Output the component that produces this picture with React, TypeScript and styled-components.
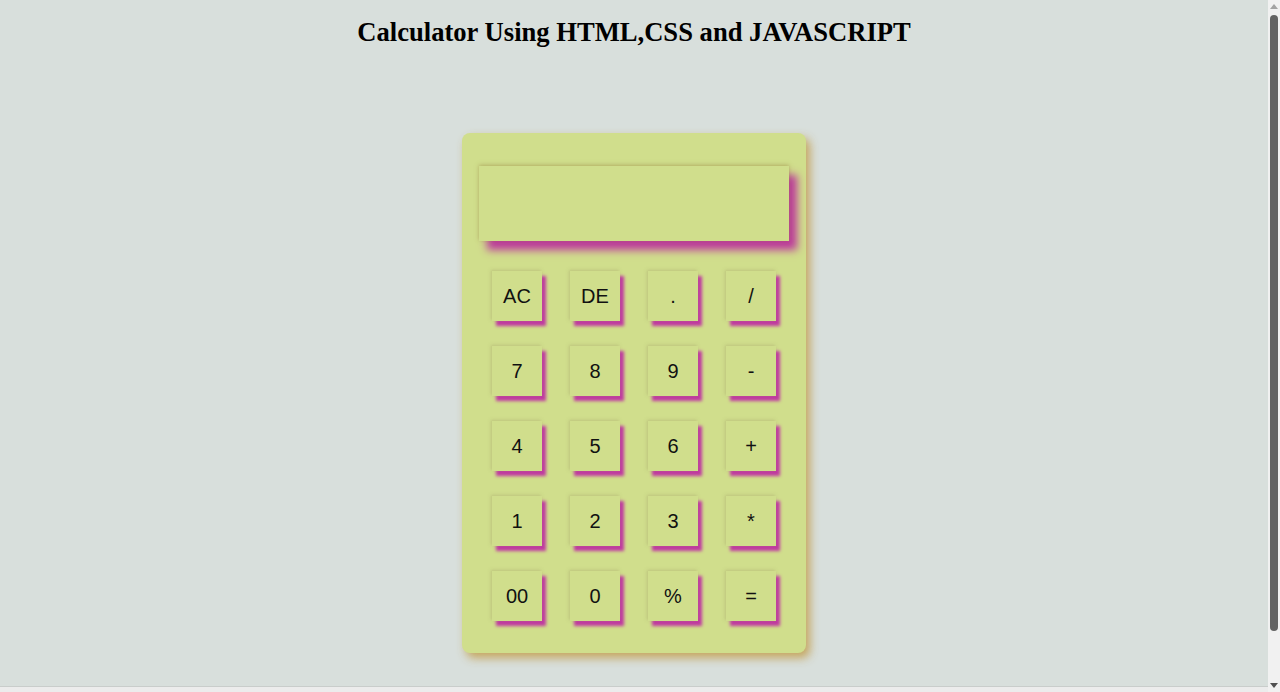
import React from "react";
import styled, { createGlobalStyle } from "styled-components";

const Global = createGlobalStyle`
  html, body { margin: 0; padding: 0; }
  body {
    background: #d8dfdc;
    font-family: "Liberation Serif", "Times New Roman", serif;
  }
`;

const Page = styled.div`
  display: flex;
  flex-direction: column;
  align-items: center;
  padding: 16px 12px 30px 0;
`;

const Title = styled.h1`
  margin: 0;
  font-family: "Liberation Serif", "Times New Roman", serif;
  font-weight: bold;
  font-size: 26.6px;
  line-height: 32px;
  color: #000;
`;

const Calculator = styled.div`
  margin-top: 85px;
  width: 344px;
  height: 520px;
  box-sizing: border-box;
  padding: 33px 17px 0;
  background: #d0de8c;
  border-radius: 8px;
  box-shadow: 4px 5px 10px rgba(195, 160, 80, 0.9);
  display: flex;
  flex-direction: column;
  align-items: center;
`;

const Display = styled.div`
  width: 310px;
  height: 75px;
  background: #d0de8c;
  box-shadow: 0 -1px 4px rgba(150, 130, 60, 0.5), 8px 9px 8px #bd3b9c;
`;

const Keys = styled.div`
  margin-top: 30px;
  display: grid;
  grid-template-columns: repeat(4, 50px);
  grid-auto-rows: 50px;
  column-gap: 28px;
  row-gap: 25px;
`;

const Key = styled.button`
  width: 50px;
  height: 50px;
  padding: 0;
  border: none;
  background: #d0de8c;
  color: #111;
  font-family: "Liberation Sans", Arial, sans-serif;
  font-size: 20px;
  box-shadow: -1px -1px 3px rgba(170, 170, 110, 0.5), 4px 5px 3px #c03aa0;
  display: flex;
  align-items: center;
  justify-content: center;
  cursor: pointer;
`;

const ScrollTrack = styled.div`
  position: fixed;
  top: 0;
  right: 0;
  width: 12px;
  height: 100%;
  background: #f1f1f1;
  display: flex;
  flex-direction: column;
  align-items: center;
  justify-content: space-between;
  padding: 4px 0;
  box-sizing: border-box;
`;

const Arrow = styled.div<{ $up?: boolean }>`
  width: 0;
  height: 0;
  border-left: 4px solid transparent;
  border-right: 4px solid transparent;
  ${(p) =>
    p.$up
      ? "border-bottom: 5px solid #a3a3a3;"
      : "border-top: 5px solid #505050;"}
`;

const Thumb = styled.div`
  flex: 1;
  width: 8px;
  margin: 6px 0 52px;
  background: #636363;
  border-radius: 4px;
`;

const BottomEdge = styled.div`
  position: fixed;
  left: 0;
  bottom: 0;
  width: 100%;
  height: 5px;
  background: #ececec;
  border-top: 1px solid #c9cdcb;
`;

const keys = [
  "AC", "DE", ".", "/",
  "7", "8", "9", "-",
  "4", "5", "6", "+",
  "1", "2", "3", "*",
  "00", "0", "%", "=",
];

export default function App() {
  return (
    <>
      <Global />
      <Page>
        <Title>Calculator Using HTML,CSS and JAVASCRIPT</Title>
        <Calculator>
          <Display />
          <Keys>
            {keys.map((k) => (
              <Key key={k}>{k}</Key>
            ))}
          </Keys>
        </Calculator>
      </Page>
      <BottomEdge />
      <ScrollTrack>
        <Arrow $up />
        <Thumb />
        <Arrow />
      </ScrollTrack>
    </>
  );
}
